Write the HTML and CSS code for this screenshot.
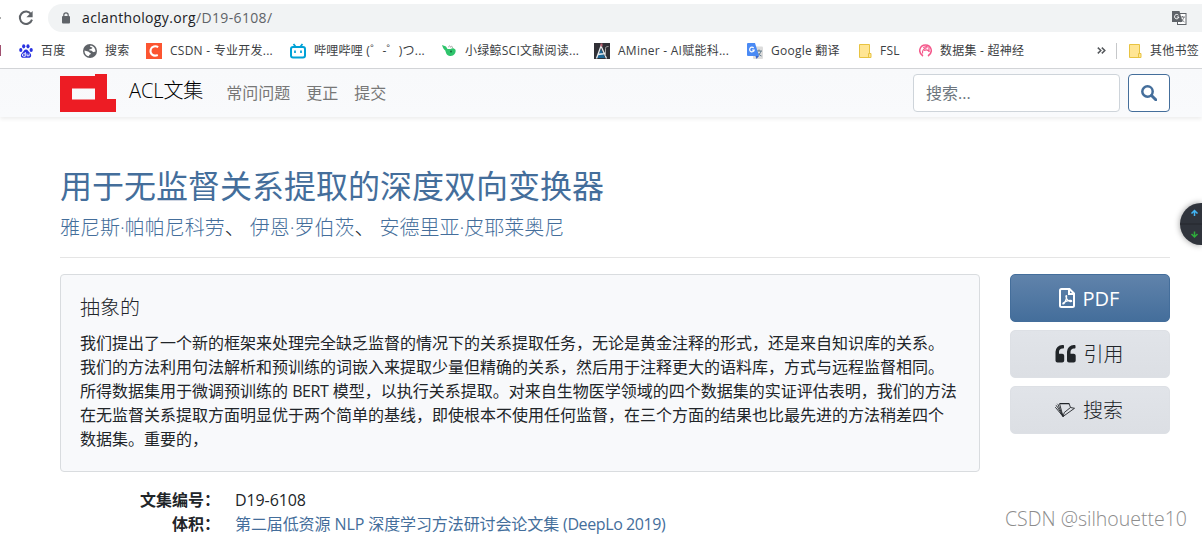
FILE: index.html
```html
<!DOCTYPE html>
<html lang="zh-CN">
<head>
  <meta charset="UTF-8">
  <meta name="viewport" content="width=device-width, initial-scale=1.0">
  <title>用于无监督关系提取的深度双向变换器 - ACL文集</title>
  <link rel="stylesheet" href="styles.css">
</head>
<body>
  <!-- Browser toolbar -->
  <div class="toolbar">
    <span class="forward"></span>
    <svg class="reload" width="16" height="16" viewBox="0 0 16 16"><path d="M13.2 4.2A6.2 6.2 0 1 0 14 9.6" fill="none" stroke="#5f6368" stroke-width="2"/><path d="M14.6 1v6.2H8.4z" fill="#5f6368"/></svg>
    <div class="address">
      <svg width="10" height="12" viewBox="0 0 10 12"><rect x="1" y="4" width="8" height="7.5" rx="1" fill="#5f6368"/><path d="M2.8 4.5V3a2.2 2.2 0 0 1 4.4 0v1.5" fill="none" stroke="#5f6368" stroke-width="1.2"/></svg>
      <span class="url">aclanthology.org<span>/D19-6108/</span></span>
      <svg class="translate" width="15" height="14" viewBox="0 0 15 14"><rect x="5.5" y="2.5" width="8.5" height="11" fill="#fff" stroke="#5f6368"/><path d="M8 6h5M10.5 5v1M12 6c-.5 2-2 4-4 5M9 7.500c.8 1.500 2 2.500 3.500 3.500" stroke="#5f6368" stroke-width=".8" fill="none"/><path d="M0 0h7.500l3 11H0z" fill="#5f6368"/><path d="M6.400 4.200A2.200 2.200 0 1 0 6.900 6H4.800" fill="none" stroke="#fff"/></svg>
    </div>
  </div>

  <div class="bookmarks">
    <span class="cut"></span>
    <span class="bookmark">
      <svg width="14" height="14" viewBox="0 0 14 14"><g fill="#2932e1"><ellipse cx="1.800" cy="6" rx="1.600" ry="2"/><ellipse cx="4.700" cy="2.300" rx="1.600" ry="2.100"/><ellipse cx="9" cy="2.300" rx="1.600" ry="2.100"/><ellipse cx="12.200" cy="6" rx="1.600" ry="2"/><path d="M7 5.500c-2 0-2.300 2-3.700 3.200C1.200 10.400 1.500 14 4.500 13.800c1.600-.2 3.400-.2 5 0 3.200.2 3.400-3.500 1.300-5.100C9.300 7.500 9 5.500 7 5.500z"/></g><path d="M6.300 8v4.300H4.600a1.200 1.200 0 0 1 0-2.500h1.700M8 9.500v2.300h2.200V9.500" stroke="#fff" fill="none" stroke-width=".9"/></svg>
      百度
    </span>
    <span class="bookmark">
      <svg width="14" height="14" viewBox="0 0 14 14"><circle cx="7" cy="7" r="7" fill="#5f6368"/><path d="M7.500 1.500c-1 1.300 0 1.900 1.200 1.700.9-.1.800 1.400-.2 1.600L6.300 5.500c-.5.800.5 1.200 1.500 1.100 1.600-.1 1.500 1.900 3 1.500l1.700-.6c.1-2.900-2-5.700-5-6zM1.500 6.500l3.500 1c1 .3 1.500 1.200 2.300 1.400.9.300.5 1.400-.3 1.500-.9.100-.9 1.600-1.700 1.900C3 11.500 1.300 9.300 1.500 6.500z" fill="#fff"/></svg>
      搜索
    </span>
    <span class="bookmark">
      <svg width="16" height="16" viewBox="0 0 16 16"><rect width="16" height="16" fill="#fc5531"/><path d="M12.200 4.100C9.500 2.500 5.700 3.200 4.700 6.500c-1.100 4.500 2.500 7.400 7.100 5.500" fill="none" stroke="#fff" stroke-width="2"/></svg>
      CSDN - 专业开发...
    </span>
    <span class="bookmark">
      <svg width="16" height="16" viewBox="0 0 16 16"><rect x="1" y="4" width="14" height="10.500" rx="2" fill="none" stroke="#00a1d6" stroke-width="2"/><path d="M3.500 1l2 2.500M12.500 1l-2 2.500" stroke="#00a1d6" stroke-width="1.800"/><path d="M5 7.500v2.500M11 7.500v2.500" stroke="#00a1d6" stroke-width="1.700"/></svg>
      哔哩哔哩 (゜-゜)つ...
    </span>
    <span class="bookmark">
      <svg width="15" height="14" viewBox="0 0 15 14"><path d="M0 1l4 1.500L5.500 5h3c1.500-1.300 4-1 5 .8.800 3.200-1.800 6.700-5.500 6.200C4.500 11.500 4 9 3.300 6.500 1.500 5.500.8 3.500 0 1z" fill="#2fc46c"/><path d="M6.500 3.300c.3-2 1.800-2 2 0 .8-1.600 2.500-1 1.800.7" stroke="#aaa" fill="none"/><circle cx="9" cy="7.500" r="1" fill="#176a3c"/></svg>
      小绿鲸SCI文献阅读...
    </span>
    <span class="bookmark">
      <svg width="16" height="16" viewBox="0 0 16 16"><rect width="16" height="16" fill="#303036"/><path d="M7 6l4 9H3z" fill="#1c6796"/><path d="M2.500 15.500L7 3l5.500 12.500M3.500 11.500l8-1" stroke="#e8edf1" stroke-width="1.300" fill="none"/><path d="M6.500.5h2v3h-2z" fill="#bd6676"/><path d="M11.500 13V5.500c0-1.500 1-2 3-2" stroke="#aaa" fill="none"/></svg>
      AMiner - AI赋能科...
    </span>
    <span class="bookmark">
      <svg width="16" height="16" viewBox="0 0 16 16"><rect x="6" y="3.500" width="10" height="12.500" rx="1" fill="#dcdcdc"/><path d="M9 8h6M12 6.500V8M14 8c-.6 2.500-2 4-4.500 5M10 9c1 2 2.500 3 4.500 4" stroke="#607988" fill="none"/><path d="M1 0h7l4 13H1a1 1 0 0 1-1-1V1a1 1 0 0 1 1-1z" fill="#4a8af4"/><path d="M6.700 5A2.300 2.300 0 1 0 7.200 7H5" fill="none" stroke="#fff" stroke-width="1.200"/><path d="M8.500 13H12l-2.500 3z" fill="#3762c7"/></svg>
      Google 翻译
    </span>
    <span class="bookmark">
      <svg width="13" height="14" viewBox="0 0 13 14"><path d="M.5.5h10v9h1.500v4H.5z" fill="#ffe593" stroke="#e8c341"/><path d="M9.500 13V9.500H11" fill="none" stroke="#e8c341"/></svg>
      FSL
    </span>
    <span class="bookmark">
      <svg width="13" height="13" viewBox="0 0 13 13"><path d="M4 12C-1.500 8.500.5 1 6.500 1S14.500 8.500 9 12" fill="none" stroke="#f4588b" stroke-width="1.500"/><path d="M3.500 9.500C3 5 5.500 4 8.500 3.500M5 6.500c2-1 4-1 5.500 1.500M4 3.500l5-1.500M10 2.500v5" fill="none" stroke="#f4588b" stroke-width="1.200"/></svg>
      数据集 - 超神经
    </span>
    <svg class="more" width="9" height="7" viewBox="0 0 9 7"><path d="M.8.6l3 2.900-3 2.900M4.800.6l3 2.900-3 2.900" fill="none" stroke="#55585c" stroke-width="1.500"/></svg>
    <span class="bookmark other">
      <svg width="13" height="14" viewBox="0 0 13 14"><path d="M.5.5h10v9h1.500v4H.5z" fill="#ffe593" stroke="#e8c341"/><path d="M9.500 13V9.500H11" fill="none" stroke="#e8c341"/></svg>
      其他书签
    </span>
  </div>

  <nav class="navbar">
    <svg class="logo" width="56" height="38" viewBox="0 0 56 38"><path fill="#ed1c24" fill-rule="evenodd" d="M0 2h35V0h12v25h9v13H0zM12 14.500v11h23v-11z"/></svg>
    <a class="brand" href="#">ACL文集</a>
    <a class="nav-link" href="#">常问问题</a>
    <a class="nav-link" href="#">更正</a>
    <a class="nav-link" href="#">提交</a>
    <form class="search">
      <input type="text" placeholder="搜索...">
      <button type="button" aria-label="搜索"><svg width="16" height="16" viewBox="0 0 16 16"><circle cx="6.500" cy="6.500" r="5.200" fill="none" stroke="#446e9b" stroke-width="2.500"/><path d="M10.500 10.500l4.300 4.300" stroke="#446e9b" stroke-width="3" stroke-linecap="round"/></svg></button>
    </form>
  </nav>

  <main class="container">
    <h2 class="title"><a href="#">用于无监督关系提取的深度双向变换器</a></h2>
    <p class="authors"><a href="#">雅尼斯·帕帕尼科劳</a>、<a href="#">伊恩·罗伯茨</a>、<a href="#">安德里亚·皮耶莱奥尼</a></p>
    <hr>
    <div class="row">
      <div class="details">
        <div class="card">
          <h5>抽象的</h5>
          <p>我们提出了一个新的框架来处理完全缺乏监督的情况下的关系提取任务，无论是黄金注释的形式，还是来自知识库的关系。<br>我们的方法利用句法解析和预训练的词嵌入来提取少量但精确的关系，然后用于注释更大的语料库，方式与远程监督相同。<br>所得数据集用于微调预训练的 <span class="latin">BERT</span> 模型，以执行关系提取。对来自生物医学领域的四个数据集的实证评估表明，我们的方法<br>在无监督关系提取方面明显优于两个简单的基线，即使根本不使用任何监督，在三个方面的结果也比最先进的方法稍差四个<br>数据集。重要的，</p>
        </div>
        <dl>
          <dt>文集编号：</dt>
          <dd>D19-6108</dd>
          <dt>体积：</dt>
          <dd><a href="#">第二届低资源 NLP 深度学习方法研讨会论文集 <span class="latin">(DeepLo 2019)</span></a></dd>
        </dl>
      </div>
      <div class="buttons">
        <a class="btn btn-primary" href="#">
          <svg width="16" height="20" viewBox="0 0 16 20"><path d="M2.500 1h8L15 5.500v12a1.500 1.500 0 0 1-1.500 1.500h-11A1.500 1.500 0 0 1 1 17.500v-15A1.500 1.500 0 0 1 2.500 1zM10 1v5h5" fill="none" stroke="#fff" stroke-width="2"/><path d="M7.300 7.500c-.8 0-.3 2.800 1.500 4.700 1.500 1.600 4 1.700 3.900.8-.2-1.300-6.200-.2-8.500 2-1 1.200.3 1.600 1.500-.4 1.400-2.400 2.500-7.100 1.600-7.100z" fill="none" stroke="#fff" stroke-width="1.200"/></svg>
          <span>PDF</span>
        </a>
        <a class="btn btn-secondary" href="#">
          <svg width="21" height="18" viewBox="0 0 21 18"><path id="quote" d="M8 0h-.7A6.800 6.800 0 0 0 .5 6.800v8.700c0 1.100.9 2 2 2h4.700c1.100 0 2-.9 2-2V10.800c0-1.100-.9-2-2-2H4v-2C4 5 5.500 3.500 7.300 3.500H8c.6 0 1-.4 1-1V1c0-.6-.4-1-1-1z" fill="#212529"/><use href="#quote" x="11.500"/></svg>
          <span>引用</span>
        </a>
        <a class="btn btn-secondary" href="#">
          <svg width="20" height="16" viewBox="0 0 20 16"><g fill="none" stroke="#212529" stroke-width=".9"><path d="M14 1.500l1.500 4 4 .8L8 14.500 4.500 1.500"/><path d="M8 14.500L1 6M8 14.500L2 4.200M8 14.500L3 2.500M1 6l-.8-.8M2 4.200L.8 3.500M3 2.500l-.7-.7M8 14.500l1.300-4 6.200-5"/></g><path d="M4.500 1h9.800v1.300H5z" fill="#212529"/></svg>
          <span>搜索</span>
        </a>
      </div>
    </div>
  </main>

  <div class="scroller">
    <svg width="22" height="42" viewBox="0 0 22 42"><path d="M0 21h22" stroke="#24272d"/><path d="M14.500 13V8M11.500 10.500l3-3 3 3" fill="none" stroke="#42b5f5" stroke-width="1.500"/><path d="M14.500 28.500v5M11.500 31l3 3 3-3" fill="none" stroke="#2eae3b" stroke-width="1.500"/></svg>
  </div>
  <div class="watermark">CSDN @silhouette10</div>
</body>
</html>
```

FILE: styles.css
```css
* {
  box-sizing: border-box;
}

body {
  margin: 0;
  width: 1202px;
  height: 537px;
  position: relative;
  overflow: hidden;
  background: #fff;
  color: #212529;
  font-family: "Open Sans", "Noto Sans CJK SC", sans-serif;
  font-size: 16px;
  line-height: 24px;
}

a {
  color: #446e9b;
  text-decoration: none;
}

svg {
  display: block;
  flex: none;
}

/* Browser */
.toolbar {
  display: flex;
  align-items: center;
  height: 36px;
}

.forward {
  width: 1px;
  height: 2px;
  margin-right: 17px;
  background: #aaa;
}

.address {
  display: flex;
  align-items: center;
  flex: 1;
  height: 28px;
  margin-left: 14px;
  padding: 0 15px 0 13px;
  border-radius: 14px 0 0 14px;
  background: #f1f3f4;
}

.url {
  margin-left: 11px;
  font-size: 14px;
  letter-spacing: 0.35px;
  color: #202124;
}

.url span {
  color: #5f6368;
}

.translate {
  margin-left: auto;
}

.bookmarks {
  display: grid;
  grid-template-columns: 19px 64px 63px 144px 152px 152px 153px 112px 60px 178px 19px 1fr;
  align-items: center;
  height: 33px;
  padding-bottom: 3px;
  border-bottom: 1px solid #d4d6d9;
  font-size: 12px;
  letter-spacing: 0.25px;
  color: #3c4043;
}

.cut {
  width: 1px;
  height: 11px;
  background: #a05070;
}

.bookmark {
  display: flex;
  align-items: center;
  gap: 8px;
  white-space: nowrap;
}

.other {
  height: 16px;
  padding-left: 12px;
  border-left: 1px solid #c6c8ca;
}

/* Site header */
.navbar {
  display: flex;
  align-items: center;
  height: 48px;
  padding: 0 32px 0 60px;
  background: linear-gradient(#f8f9fb, #f9fafc);
  box-shadow: 0 2px 4px rgba(0, 0, 0, 0.075);
}

.brand {
  margin: 0 23px 4px 13px;
  font-size: 20px;
  font-weight: 300;
  letter-spacing: -0.1px;
  color: #000;
}

.nav-link {
  margin-right: 16px;
  color: #777;
}

.search {
  display: flex;
  gap: 8px;
  margin-left: auto;
}

.search input {
  width: 207px;
  height: 38px;
  padding: 6px 12px;
  border: 1px solid #ced4da;
  border-radius: 4px;
  font: inherit;
}

.search input::placeholder {
  color: #6c757d;
}

.search button {
  display: flex;
  align-items: center;
  justify-content: center;
  width: 42px;
  height: 38px;
  padding: 0;
  border: 1px solid #446e9b;
  border-radius: 4px;
  background: #fff;
}

/* Paper */
.container {
  width: 1110px;
  margin: 0 0 0 60px;
  padding-top: 50px;
}

.title {
  margin: 0 0 8px;
  font-size: 32px;
  font-weight: 400;
  line-height: 38px;
}

.authors {
  display: flex;
  margin: 0;
  font-size: 20px;
  font-weight: 300;
  line-height: 30px;
}

.authors a + a {
  margin-left: 5px;
}

hr {
  margin: 14px 0 16px;
  border: 0;
  border-top: 1px solid #e5e5e5;
}

.row {
  display: flex;
  justify-content: space-between;
}

.details {
  width: 920px;
}

.card {
  height: 198px;
  padding: 21px 19px;
  border: 1px solid #d9dcdf;
  border-radius: 4px;
  background: #f8f9fb;
  white-space: nowrap;
}

.card h5 {
  margin: 0 0 11px;
  font-size: 20px;
  font-weight: 300;
  line-height: 24px;
}

.card p {
  margin: 0;
}

.latin {
  letter-spacing: -0.4px;
}

dl {
  display: grid;
  grid-template-columns: 160px 1fr;
  column-gap: 15px;
  margin: 16px 0 0;
}

dt {
  font-weight: 700;
  text-align: right;
}

dd {
  margin: 0;
  letter-spacing: -0.1px;
}

.buttons {
  display: flex;
  flex-direction: column;
  gap: 8px;
  width: 160px;
}

.btn {
  display: flex;
  align-items: center;
  justify-content: center;
  gap: 8px;
  height: 48px;
  padding-right: 2px;
  border-radius: 5px;
  font-size: 20px;
}

.btn span {
  padding-top: 2px;
}

.btn-primary {
  border: 1px solid #446e9b;
  background: linear-gradient(#6083ab, #446e9b);
  color: #fff;
}

.btn-secondary {
  border: 1px solid #dde0e5;
  background: linear-gradient(#e1e4e9, #dcdfe4);
  color: #212529;
  font-weight: 300;
}

/* Overlays */
.scroller {
  position: absolute;
  top: 203px;
  right: 0;
  width: 22px;
  height: 42px;
  border-radius: 21px 0 0 21px;
  background: #30343c;
  box-shadow: 0 0 6px rgba(0, 0, 0, 0.4);
}

.watermark {
  position: absolute;
  right: 15px;
  bottom: 6px;
  font-size: 19.5px;
  font-weight: 300;
  color: #8c8c8c;
}
```
